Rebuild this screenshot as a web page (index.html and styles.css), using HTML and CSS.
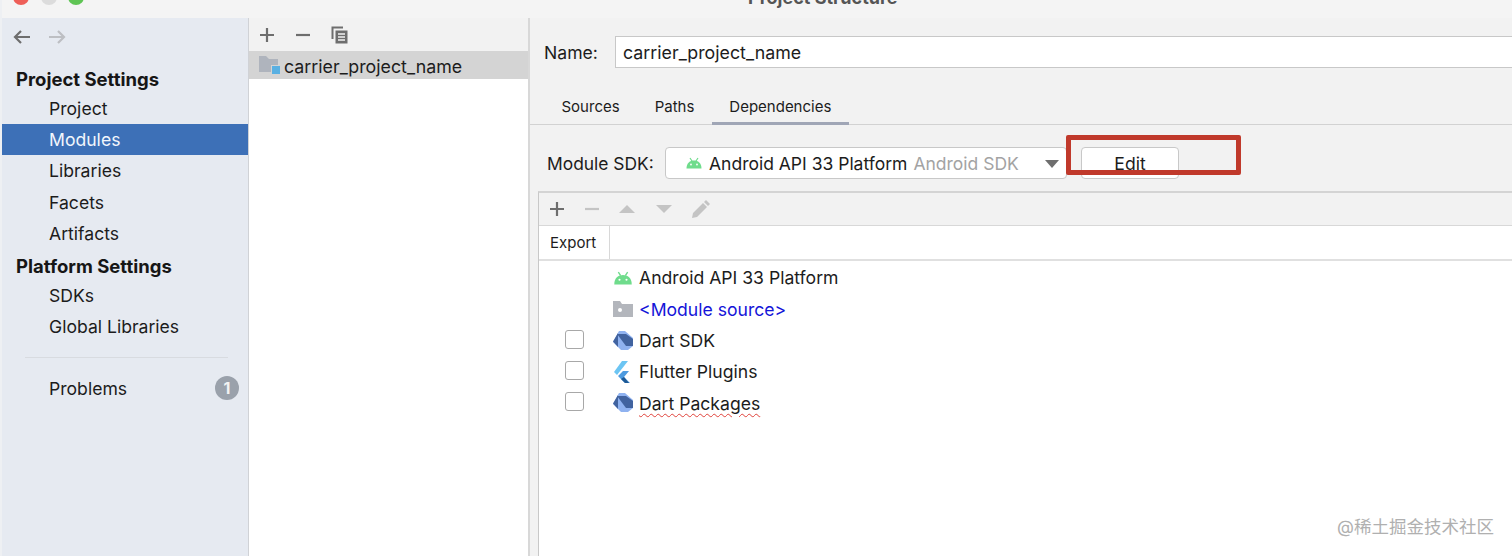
FILE: index.html
```html
<!doctype html>
<html lang="en">

<head>
  <meta charset="utf-8" />
  <title>Project Structure</title>
  <link rel="stylesheet" href="styles.css">
</head>

<body>
  <div id="root">
    <div class="titlebar">
      <div class="lights">
        <span class="light red"></span>
        <span class="light grey"></span>
        <span class="light green"></span>
      </div>
      <div class="window-title">Project Structure</div>
    </div>

    <div class="main">
      <div class="sidebar">
        <div class="nav-arrows">
          <svg width="20" height="16" viewBox="0 0 20 16"><path d="M18 8H3M9 2L3 8l6 6" fill="none" stroke="#6e6e6e" stroke-width="2.2"/></svg>
          <svg width="20" height="16" viewBox="0 0 20 16"><path d="M1 8h15M10 2l6 6-6 6" fill="none" stroke="#bdbfc3" stroke-width="2.2"/></svg>
        </div>
        <div class="side-title first">Project Settings</div>
        <div class="side-item">Project</div>
        <div class="side-item selected">Modules</div>
        <div class="side-item">Libraries</div>
        <div class="side-item">Facets</div>
        <div class="side-item">Artifacts</div>
        <div class="side-title platform">Platform Settings</div>
        <div class="side-item">SDKs</div>
        <div class="side-item">Global Libraries</div>
        <div class="side-line"></div>
        <div class="side-item problems">Problems <span class="count">1</span></div>
      </div>

      <div class="modules">
        <div class="modules-bar">
          <svg width="16" height="16" viewBox="0 0 16 16"><path d="M8 1v14M1 8h14" stroke="#6e6e6e" stroke-width="2.2"/></svg>
          <svg width="16" height="16" viewBox="0 0 16 16"><path d="M1 8h14" stroke="#6e6e6e" stroke-width="2.2"/></svg>
          <svg width="18" height="18" viewBox="0 0 18 18"><path d="M1.5 13V1.5H12" fill="none" stroke="#6e6e6e" stroke-width="2"/><path d="M4.5 4.5h12v13h-12z" fill="#6e6e6e"/><path d="M7 8h7M7 11h7M7 14h7" stroke="#f2f2f2" stroke-width="1.3"/></svg>
        </div>
        <div class="module-row">
          <svg width="21" height="20" viewBox="0 0 21 20"><path d="M0 1h7l3 3h9v13H0z" fill="#afb4bd"/><path d="M12 10h9v10h-9z" fill="#d4d4d4"/><path d="M13 11h8v8h-8z" fill="#5ab0e2"/></svg>
          <span class="module-name">carrier_project_name</span>
        </div>
      </div>

      <div class="detail">
        <div class="name-row">
          <label class="name-label">Name:</label>
          <div class="name-input">carrier_project_name</div>
        </div>
        <div class="tabs">
          <div class="tab">Sources</div>
          <div class="tab">Paths</div>
          <div class="tab active">Dependencies</div>
        </div>
        <div class="sdk-row">
          <div class="sdk-label">Module SDK:</div>
          <div class="combo">
            <svg class="android" width="16" height="12" viewBox="0 0 16 12"><path d="M0.500 11.500C0.500 6 4 3.500 8 3.500S15.500 6 15.500 11.500z" fill="#6fdc8c"/><path d="M4 1l2 3M12 1l-2 3" stroke="#6fdc8c" stroke-width="1.200"/><circle cx="5" cy="7.500" r="0.900" fill="#fff"/><circle cx="11" cy="7.500" r="0.900" fill="#fff"/></svg>
            <span>Android API 33 Platform</span>
            <span class="muted">Android SDK</span>
            <span class="caret"></span>
          </div>
          <div class="edit-btn">Edit</div>
          <div class="red-mark"></div>
        </div>
        <div class="deps">
          <div class="deps-bar">
            <svg width="16" height="16" viewBox="0 0 16 16"><path d="M8 1v14M1 8h14" stroke="#6e6e6e" stroke-width="2.200"/></svg>
            <svg width="16" height="16" viewBox="0 0 16 16"><path d="M1 8h14" stroke="#c4c4c4" stroke-width="2.200"/></svg>
            <svg width="18" height="16" viewBox="0 0 18 16"><path d="M1 12L9 4l8 8z" fill="#c4c4c4"/></svg>
            <svg width="18" height="16" viewBox="0 0 18 16"><path d="M1 4h16l-8 8z" fill="#c4c4c4"/></svg>
            <svg width="20" height="20" viewBox="0 0 20 20"><path d="M1 19l1-5L12 4l4 4L6 18zM13 3l2-2 4 4-2 2z" fill="#c4c4c4"/></svg>
          </div>
          <div class="deps-head"><div class="export-col">Export</div></div>
          <div class="dep-row">
            <span class="check none"></span>
            <svg width="20" height="14" viewBox="0 0 16 12"><path d="M0.500 11.500C0.500 6 4 3.500 8 3.500S15.500 6 15.500 11.500z" fill="#6fdc8c"/><path d="M4 1l2 3M12 1l-2 3" stroke="#6fdc8c" stroke-width="1.200"/><circle cx="5" cy="7.500" r="0.900" fill="#fff"/><circle cx="11" cy="7.500" r="0.900" fill="#fff"/></svg>
            <span>Android API 33 Platform</span>
          </div>
          <div class="dep-row">
            <span class="check none"></span>
            <svg width="20" height="16" viewBox="0 0 20 16"><path d="M0 0h7l2 3h11v13H0z" fill="#b3b6bc"/><circle cx="7" cy="9" r="2" fill="#fff"/></svg>
            <span class="source">&lt;Module source&gt;</span>
          </div>
          <div class="dep-row">
            <span class="check"></span>
            <svg width="20" height="20" viewBox="0 0 20 20"><path d="M6 0h6l8 7v8l-5 4H8L0 11z" fill="#8fb2f0"/><path d="M4 3h9l7 5v7h-7z" fill="#41639f"/><path d="M5 2L0 10.500 5 16z" fill="#41639f"/></svg>
            <span>Dart SDK</span>
          </div>
          <div class="dep-row">
            <span class="check"></span>
            <svg width="20" height="22" viewBox="0 0 20 22"><path d="M15 0h-6L1 11l3 3z" fill="#6cc5f3"/><path d="M16 10h-6l-5 5 5 5 2 2h5l-6-6z" fill="#4e9be0"/><path d="M10 20l-2-2 3-2 5 6h-4z" fill="#1f5a96"/></svg>
            <span>Flutter Plugins</span>
          </div>
          <div class="dep-row">
            <span class="check"></span>
            <svg width="20" height="20" viewBox="0 0 20 20"><path d="M6 0h6l8 7v8l-5 4H8L0 11z" fill="#8fb2f0"/><path d="M4 3h9l7 5v7h-7z" fill="#41639f"/><path d="M5 2L0 10.500 5 16z" fill="#41639f"/></svg>
            <span class="typo">Dart Packages</span>
          </div>
        </div>
        <div class="watermark">@稀土掘金技术社区</div>
      </div>
    </div>
  </div>
</body>

</html>
```

FILE: styles.css
```css
html,
body {
  height: 100%;
  width: 100%;
  margin: 0;
  padding: 0;
  overflow: hidden;
}

* {
  font-family: Inter, "Noto Sans CJK SC", sans-serif;
  box-sizing: border-box;
}

#root {
  height: 100%;
  width: 100%;
  display: flex;
  flex-direction: column;
  padding-left: 2px;
  background: #eef0f3;
  color: #1c1c1c;
  font-size: 17.600px;
}

.titlebar {
  height: 18px;
  flex-shrink: 0;
  background: #f4f4f4;
  position: relative;
  overflow: hidden;
}

.lights {
  display: flex;
  gap: 11.500px;
  margin-top: -11px;
  margin-left: 11px;
}

.light {
  width: 16px;
  height: 16px;
  border-radius: 50%;
}

.red {
  background: #ee5f58;
}

.grey {
  background: #dcdcdc;
}

.green {
  background: #5fc454;
}

.window-title {
  position: absolute;
  left: 746px;
  top: -13px;
  font-size: 18px;
  font-weight: bold;
  color: #555;
}

.main {
  flex: 1;
  display: flex;
  min-height: 0;
}

.sidebar {
  width: 247px;
  flex-shrink: 0;
  background: #e6eaf1;
  border-right: 1px solid #d0d2d6;
}

.nav-arrows {
  height: 46px;
  display: flex;
  align-items: center;
  gap: 16px;
  padding-left: 10px;
  padding-bottom: 8px;
}

.side-title {
  height: 31px;
  line-height: 31px;
  padding-left: 14px;
  font-size: 18.500px;
  font-weight: 700;
  color: #161616;
}

.first {
  height: 28.700px;
  line-height: 30px;
}

.platform {
  line-height: 35px;
}

.side-item {
  height: 31.300px;
  line-height: 31.300px;
  padding-left: 47px;
}

.side-item.selected {
  background: #3d70b7;
  color: #f2f6fc;
}

.side-line {
  height: 1px;
  margin: 14.500px 20px 14.500px 23px;
  background: #d8dbe0;
}

.problems {
  display: flex;
  justify-content: space-between;
  align-items: center;
  padding-right: 9px;
}

.count {
  width: 24px;
  height: 24px;
  line-height: 24px;
  border-radius: 50%;
  background: #9aa1ab;
  color: #f2f2f2;
  text-align: center;
  font-weight: 700;
  font-size: 16px;
}

.modules {
  width: 281px;
  flex-shrink: 0;
  background: #fff;
  border-right: 2px solid #d8d8d8;
}

.modules-bar {
  height: 33px;
  background: #f2f2f2;
  display: flex;
  align-items: center;
  gap: 20px;
  padding-left: 10px;
}

.module-row {
  height: 28px;
  background: #d4d4d4;
  display: flex;
  align-items: center;
  gap: 4px;
  padding-left: 10px;
}

.module-name {
  font-size: 17.800px;
  padding-top: 2px;
}

.detail {
  flex: 1;
  min-width: 0;
  background: #f2f2f2;
  position: relative;
  overflow: hidden;
}

.name-row {
  display: flex;
  align-items: center;
  height: 32px;
  margin-top: 18px;
  padding-left: 14px;
}

.name-label {
  width: 71px;
  padding-top: 1px;
}

.name-input {
  flex: 1;
  height: 32px;
  line-height: 32px;
  padding-left: 7px;
  background: #fff;
  border: 1px solid #c8c8c8;
  white-space: nowrap;
  margin-right: -4px;
  font-size: 17.800px;
}

.tabs {
  display: flex;
  height: 57px;
  padding-left: 14px;
  padding-top: 25px;
  border-bottom: 1px solid #d2d2d2;
  font-size: 15px;
}

.tab {
  padding: 0 17.500px;
  height: 32px;
  line-height: 28px;
}

.tab.active {
  border-bottom: 3px solid #a0a6b6;
}

.sdk-row {
  display: flex;
  align-items: center;
  height: 32px;
  margin-top: 22px;
  padding-left: 17px;
  position: relative;
}

.sdk-label {
  width: 118px;
  font-size: 17.400px;
}

.combo {
  width: 402px;
  height: 32px;
  display: flex;
  align-items: center;
  gap: 6px;
  padding-left: 20px;
  background: #fff;
  border: 1px solid #c8c8c8;
  border-radius: 4px;
  position: relative;
  font-size: 17.500px;
}

.android {
  margin-right: 1px;
}

.muted {
  color: #a3a3a3;
}

.caret {
  position: absolute;
  right: 7px;
  top: 12px;
  border-left: 7px solid transparent;
  border-right: 7px solid transparent;
  border-top: 8px solid #6e6e6e;
}

.edit-btn {
  width: 98px;
  height: 32px;
  line-height: 32px;
  margin-left: 14px;
  text-align: center;
  background: #fff;
  border: 1px solid #c8c8c8;
  border-radius: 4px;
}

.red-mark {
  position: absolute;
  left: 536px;
  top: -12px;
  width: 175px;
  height: 40px;
  border: 5px solid #c0392b;
  border-radius: 2px;
}

.deps {
  margin-left: 8px;
  margin-top: 12px;
  height: 400px;
  background: #fff;
  border-top: 2px solid #d4d4d4;
  border-left: 1px solid #c8c8c8;
}

.deps-bar {
  height: 33px;
  background: #f2f2f2;
  border-bottom: 1px solid #d8d8d8;
  display: flex;
  align-items: center;
  gap: 18.500px;
  padding-left: 10px;
}

.deps-head {
  height: 35px;
  margin-bottom: 1.200px;
  border-bottom: 2px solid #e0e0e0;
  display: flex;
  font-size: 15px;
}

.export-col {
  width: 71px;
  line-height: 33px;
  padding-left: 11px;
  border-right: 1px solid #d8d8d8;
}

.dep-row {
  height: 31.350px;
  display: flex;
  align-items: center;
  gap: 6px;
  padding-left: 26px;
}

.check {
  width: 19px;
  height: 19px;
  margin-right: 23px;
  margin-top: -3px;
  background: #fff;
  border: 1px solid #a8a8a8;
  border-radius: 3px;
}

.check.none {
  visibility: hidden;
}

.source {
  color: #1414d8;
}

.typo {
  text-decoration: underline wavy #e0413a 1px;
  text-underline-offset: 3px;
}

.watermark {
  position: absolute;
  right: 18px;
  bottom: 18px;
  font-size: 17.500px;
  color: #b0b0b0;
}
```
